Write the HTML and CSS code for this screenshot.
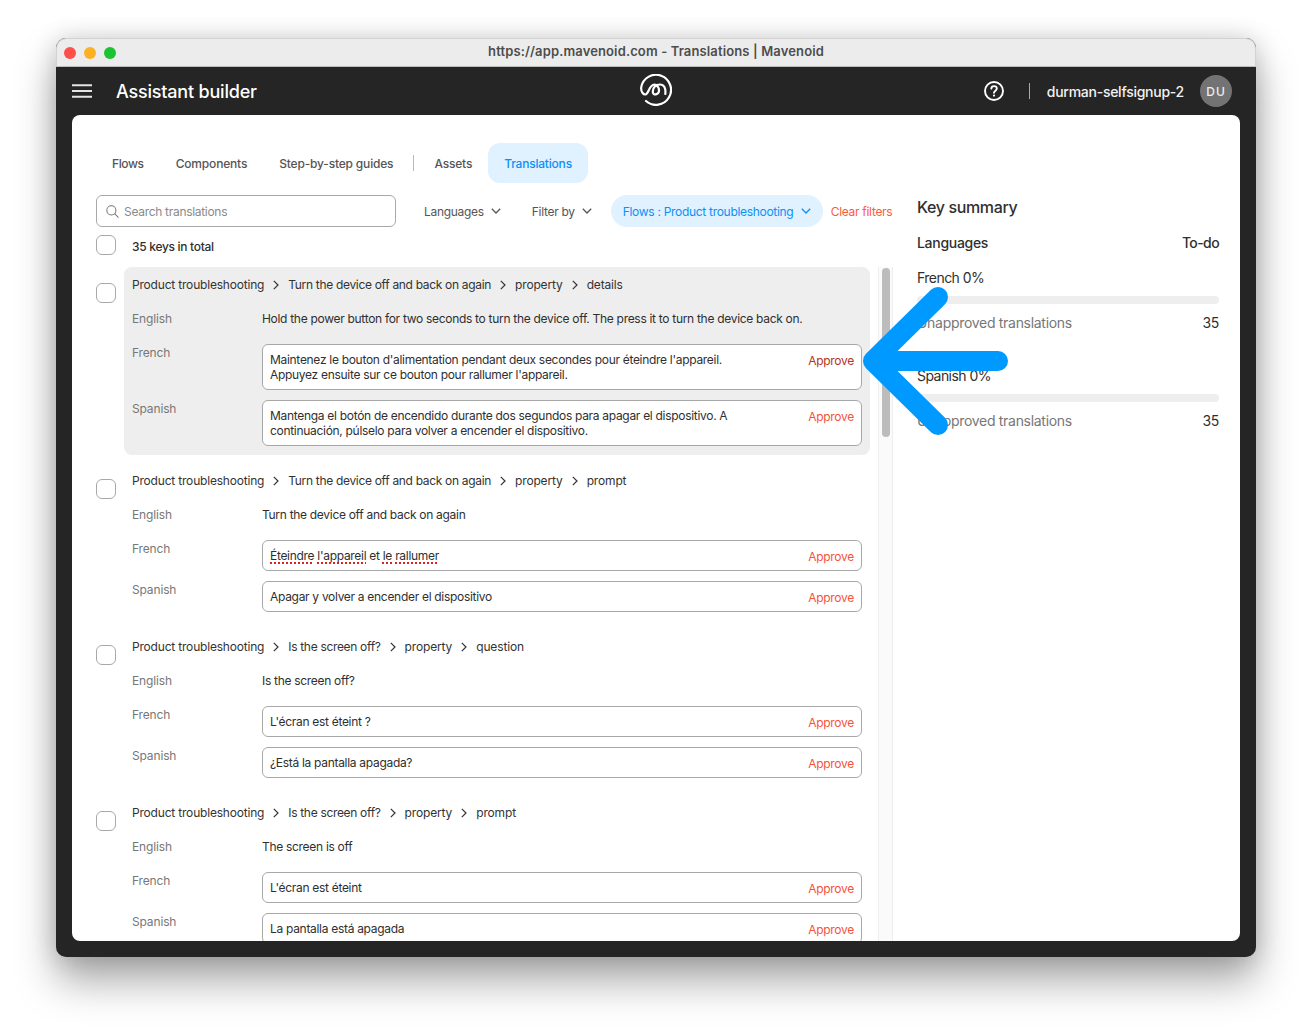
FILE: index.html
```html
<!DOCTYPE html>
<html lang="en">
<head>
<meta charset="utf-8">
<title>Translations | Mavenoid</title>
<link rel="stylesheet" href="styles.css">
</head>
<body>
<div class="window">
  <div class="titlebar">
    <div class="lights"><i class="light red"></i><i class="light yellow"></i><i class="light green"></i></div>
    <div class="url">https://app.mavenoid.com - Translations | Mavenoid</div>
  </div>
  <header class="appbar">
    <div class="appbar-left">
      <svg class="burger" width="20" height="14" viewBox="0 0 20 14"><path d="M0 1.2h20M0 7h20M0 12.8h20" stroke="#e4e4e4" stroke-width="2" fill="none"/></svg>
      <span class="app-title">Assistant builder</span>
    </div>
    <svg class="logo" width="32" height="32" viewBox="0 0 32 32" fill="none" stroke="#fff" stroke-width="2.2" stroke-linecap="round"><path d="M6 27A15 15 0 1 0 1.200 13.500C.8 18 3.500 20.700 5.500 20.500C8.500 20.200 9 12 13.500 10.800C16.500 10 19.200 13.500 19 16.800C18.800 20.800 13 22 12.800 18C12.600 13.500 16 10.500 20 10.500C24 10.500 26 14 25.300 20"/></svg>
    <div class="appbar-right">
      <svg class="help" width="20" height="20" viewBox="0 0 20 20" fill="none" stroke="#fff" stroke-width="1.900"><circle cx="10" cy="10" r="9"/><path d="M7.300 7.600C7.400 6 8.600 5.100 10 5.100c1.600 0 2.800 1 2.800 2.400 0 2.100-2.800 2.200-2.800 4.300" stroke-linecap="round"/><circle cx="10" cy="14.600" r="1.100" fill="#fff" stroke="none"/></svg>
      <span class="vbar"></span>
      <span class="user">durman-selfsignup-2</span>
      <span class="avatar">DU</span>
    </div>
  </header>
  <main class="panel">
    <div class="content">
      <nav class="tabs">
        <a class="tab">Flows</a>
        <a class="tab">Components</a>
        <a class="tab">Step-by-step guides</a>
        <span class="tab-sep"></span>
        <a class="tab">Assets</a>
        <a class="tab active">Translations</a>
      </nav>
      <div class="columns">
        <section class="left">
          <div class="toolbar">
            <div class="search">
              <svg width="13" height="13" viewBox="0 0 14 14" fill="none" stroke="#777" stroke-width="1.100"><circle cx="5.800" cy="5.800" r="4.900"/><path d="M9.300 9.300l4.200 4.200"/></svg>
              <span>Search translations</span>
            </div>
            <div class="filter filter-lang">Languages <svg class="chev" width="10" height="6" viewBox="0 0 10 6"><path d="M.8.8L5 5l4.200-4.200" fill="none" stroke="currentColor" stroke-width="1.300"/></svg></div>
            <div class="filter filter-by">Filter by <svg class="chev" width="10" height="6" viewBox="0 0 10 6"><path d="M.8.8L5 5l4.200-4.200" fill="none" stroke="currentColor" stroke-width="1.300"/></svg></div>
            <div class="pill">Flows : Product troubleshooting <svg class="chev" width="10" height="6" viewBox="0 0 10 6"><path d="M.8.8L5 5l4.200-4.200" fill="none" stroke="currentColor" stroke-width="1.300"/></svg></div>
            <a class="clear">Clear filters</a>
          </div>
          <div class="total"><span class="check"></span><span class="total-text">35 keys in total</span></div>
          <div class="list-wrap">
            <div class="list">
              <article class="entry">
                <span class="check entry-check"></span>
                <div class="card hovered">
                  <div class="path"><span>Product troubleshooting</span><svg class="gt" width="6" height="10" viewBox="0 0 6 10"><path d="M.8.8L5 5 .8 9.200" fill="none" stroke="#333" stroke-width="1.200"/></svg><span>Turn the device off and back on again</span><svg class="gt" width="6" height="10" viewBox="0 0 6 10"><path d="M.8.8L5 5 .8 9.200" fill="none" stroke="#333" stroke-width="1.200"/></svg><span>property</span><svg class="gt" width="6" height="10" viewBox="0 0 6 10"><path d="M.8.8L5 5 .8 9.200" fill="none" stroke="#333" stroke-width="1.200"/></svg><span>details</span></div>
                  <div class="line source"><span class="lang">English</span><span>Hold the power button for two seconds to turn the device off. The press it to turn the device back on.</span></div>
                  <div class="line"><span class="lang">French</span><div class="field"><span class="txt">Maintenez le bouton d'alimentation pendant deux secondes pour éteindre l'appareil.<br>Appuyez ensuite sur ce bouton pour rallumer l'appareil.</span><a class="approve dark">Approve</a></div></div>
                  <div class="line"><span class="lang">Spanish</span><div class="field"><span class="txt">Mantenga el botón de encendido durante dos segundos para apagar el dispositivo. A<br>continuación, púlselo para volver a encender el dispositivo.</span><a class="approve">Approve</a></div></div>
                </div>
              </article>
              <article class="entry">
                <span class="check entry-check"></span>
                <div class="card">
                  <div class="path"><span>Product troubleshooting</span><svg class="gt" width="6" height="10" viewBox="0 0 6 10"><path d="M.8.8L5 5 .8 9.200" fill="none" stroke="#333" stroke-width="1.200"/></svg><span>Turn the device off and back on again</span><svg class="gt" width="6" height="10" viewBox="0 0 6 10"><path d="M.8.8L5 5 .8 9.200" fill="none" stroke="#333" stroke-width="1.200"/></svg><span>property</span><svg class="gt" width="6" height="10" viewBox="0 0 6 10"><path d="M.8.8L5 5 .8 9.200" fill="none" stroke="#333" stroke-width="1.200"/></svg><span>prompt</span></div>
                  <div class="line source"><span class="lang">English</span><span>Turn the device off and back on again</span></div>
                  <div class="line"><span class="lang">French</span><div class="field"><span class="txt"><u>Éteindre</u> <u>l'appareil</u> et <u>le</u> <u>rallumer</u></span><a class="approve">Approve</a></div></div>
                  <div class="line"><span class="lang">Spanish</span><div class="field"><span class="txt">Apagar y volver a encender el dispositivo</span><a class="approve">Approve</a></div></div>
                </div>
              </article>
              <article class="entry">
                <span class="check entry-check"></span>
                <div class="card">
                  <div class="path"><span>Product troubleshooting</span><svg class="gt" width="6" height="10" viewBox="0 0 6 10"><path d="M.8.8L5 5 .8 9.200" fill="none" stroke="#333" stroke-width="1.200"/></svg><span>Is the screen off?</span><svg class="gt" width="6" height="10" viewBox="0 0 6 10"><path d="M.8.8L5 5 .8 9.200" fill="none" stroke="#333" stroke-width="1.200"/></svg><span>property</span><svg class="gt" width="6" height="10" viewBox="0 0 6 10"><path d="M.8.8L5 5 .8 9.200" fill="none" stroke="#333" stroke-width="1.200"/></svg><span>question</span></div>
                  <div class="line source"><span class="lang">English</span><span>Is the screen off?</span></div>
                  <div class="line"><span class="lang">French</span><div class="field"><span class="txt">L'écran est éteint ?</span><a class="approve">Approve</a></div></div>
                  <div class="line"><span class="lang">Spanish</span><div class="field"><span class="txt">¿Está la pantalla apagada?</span><a class="approve">Approve</a></div></div>
                </div>
              </article>
              <article class="entry">
                <span class="check entry-check"></span>
                <div class="card">
                  <div class="path"><span>Product troubleshooting</span><svg class="gt" width="6" height="10" viewBox="0 0 6 10"><path d="M.8.8L5 5 .8 9.200" fill="none" stroke="#333" stroke-width="1.200"/></svg><span>Is the screen off?</span><svg class="gt" width="6" height="10" viewBox="0 0 6 10"><path d="M.8.8L5 5 .8 9.200" fill="none" stroke="#333" stroke-width="1.200"/></svg><span>property</span><svg class="gt" width="6" height="10" viewBox="0 0 6 10"><path d="M.8.8L5 5 .8 9.200" fill="none" stroke="#333" stroke-width="1.200"/></svg><span>prompt</span></div>
                  <div class="line source"><span class="lang">English</span><span>The screen is off</span></div>
                  <div class="line"><span class="lang">French</span><div class="field"><span class="txt">L'écran est éteint</span><a class="approve">Approve</a></div></div>
                  <div class="line"><span class="lang">Spanish</span><div class="field"><span class="txt">La pantalla está apagada</span><a class="approve">Approve</a></div></div>
                </div>
              </article>
            </div>
            <div class="scroll"><span class="thumb"></span></div>
          </div>
        </section>
        <aside class="summary">
          <h2>Key summary</h2>
          <div class="sum-head"><span>Languages</span><span class="todo">To-do</span></div>
          <div class="sum-block">
            <div class="sum-lang">French 0%</div>
            <div class="bar"></div>
            <div class="sum-row"><span class="muted">Unapproved translations</span><span>35</span></div>
          </div>
          <div class="sum-block">
            <div class="sum-lang">Spanish 0%</div>
            <div class="bar"></div>
            <div class="sum-row"><span class="muted">Unapproved translations</span><span>35</span></div>
          </div>
        </aside>
      </div>
    </div>
  </main>
  <svg class="arrow" width="170" height="150" viewBox="0 0 170 150" fill="none" stroke="#0099ff" stroke-width="20" stroke-linecap="round" stroke-linejoin="round"><path d="M80 11L15 75L80 139M15 75H140"/></svg>
</div>
</body>
</html>
```
FILE: styles.css
```css
* { box-sizing: border-box; }
html, body { margin: 0; height: 100%; }
body {
  background: #fff;
  padding: 38px 56px 0;
  font-family: Inter, "Noto Sans", sans-serif;
  font-size: 12px;
  line-height: 15px;
  letter-spacing: -0.3px;
  color: #2f2f2f;
  overflow: hidden;
}
.window {
  position: relative;
  width: 1200px;
  height: 919px;
  border-radius: 10px;
  background: #252525;
  box-shadow: 0 24px 40px rgba(0,0,0,.34), 0 0 24px rgba(0,0,0,.16);
  display: flex;
  flex-direction: column;
}
.titlebar {
  height: 29px;
  flex: none;
  background: #ececec;
  border: 1px solid #d2d2d2;
  border-bottom: 1px solid #bdbdbd;
  border-radius: 10px 10px 0 0;
  display: flex;
  align-items: center;
  position: relative;
}
.lights { display: flex; gap: 8px; padding-left: 7px; }
.light { width: 12px; height: 12px; border-radius: 50%; display: block; }
.red { background: #ff4f4b; }
.yellow { background: #fcb024; }
.green { background: #19c332; }
.url {
  position: absolute; left: 0; right: 0; top: 5px;
  text-align: center;
  font-size: 13px;
  font-weight: 600;
  letter-spacing: 0.13px;
  color: #4d4d4d;
}
.appbar {
  height: 48px;
  flex: none;
  display: flex;
  align-items: center;
  justify-content: space-between;
  padding: 0 24px 0 16px;
  position: relative;
  color: #fff;
}
.appbar-left { display: flex; align-items: center; gap: 24px; }
.app-title { font-size: 18px; font-weight: 500; line-height: 24px; letter-spacing: -0.2px; position: relative; top: 1px; }
.logo { position: absolute; left: 584px; top: 7px; }
.appbar-right { display: flex; align-items: center; }
.help { margin-right: 25px; }
.vbar { width: 1px; height: 16px; background: #aaa; margin-right: 17px; }
.user { font-size: 14px; font-weight: 500; margin-right: 16px; color: #f2f2f2; letter-spacing: -0.26px; }
.avatar {
  width: 32px; height: 32px; border-radius: 50%;
  background: #737373; color: #eee;
  display: flex; align-items: center; justify-content: center;
  font-size: 12px; font-weight: 500; letter-spacing: 1px;
}
.panel {
  flex: 1;
  margin: 0 16px 16px;
  background: #fff;
  border-radius: 8px;
  overflow: hidden;
  min-height: 0;
}
.content { padding: 28px 21px 0 24px; height: 100%; display: flex; flex-direction: column; }
.tabs { display: flex; align-items: center; height: 40px; flex: none; }
.tab { font-weight: 500; color: #555; padding: 1px 16px 0; line-height: 39px; letter-spacing: -0.18px; }
.tab:first-child { letter-spacing: -0.38px; }
.tab-sep { width: 1px; height: 16px; background: #bbb; margin: 0 4px; }
.tab.active { background: #e0f1ff; color: #0c90f6; border-radius: 12px; letter-spacing: -0.2px; }
.columns { display: flex; flex: 1; min-height: 0; margin-top: 12px; }
.left { width: 797px; flex: none; display: flex; flex-direction: column; min-height: 0; }
.toolbar { display: flex; align-items: center; height: 32px; flex: none; }
.search {
  width: 300px; height: 32px; flex: none;
  border: 1px solid #a8a8a8; border-radius: 6px;
  display: flex; align-items: center; gap: 5px;
  padding-left: 9px; color: #8a8a8a;
}
.filter { color: #555; display: flex; align-items: center; gap: 7px; flex: none; white-space: nowrap; }
.filter-lang { margin-left: 28px; }
.filter-by { margin-left: 31px; }
.chev { flex: none; }
.pill {
  margin-left: 19px;
  height: 32px; width: 212px; border-radius: 16px; flex: none;
  background: #e0f1ff; color: #0c90f6;
  display: flex; align-items: center; gap: 8px;
  padding-left: 12px;
  white-space: nowrap;
}
.clear { margin-left: 8px; color: #fb5a3e; white-space: nowrap; }
.total { display: flex; align-items: center; gap: 16px; height: 20px; margin-top: 8px; font-weight: 500; flex: none; }
.total-text { margin-top: 2px; }
.check {
  display: block; flex: none;
  width: 20px; height: 20px;
  border: 1px solid #a8a8a8; border-radius: 6px; background: #fff;
}
.list-wrap { display: flex; flex: 1; min-height: 0; margin-top: 12px; }
.list { width: 782px; flex: none; overflow: hidden; }
.entry { display: flex; margin-bottom: 8px; }
.entry-check { margin: 16px 8px 0 0; }
.card { width: 746px; flex: none; padding: 8px 8px 9px; border-radius: 8px; }
.card.hovered { background: #eeeeee; }
.path { display: flex; align-items: center; height: 20px; padding-bottom: 1px; color: #333; letter-spacing: -0.15px; }
.path span:nth-of-type(2) { letter-spacing: -0.32px; }
.path span:first-child { letter-spacing: -0.19px; }
.gt { margin: 0 9px; flex: none; }
.line { display: flex; margin-top: 10px; }
.line.source { margin-top: 14px; margin-bottom: 15px; line-height: 20px; }
.lang { width: 130px; flex: none; color: #777; line-height: 18px; letter-spacing: -0.15px; }
.source .lang { line-height: 20px; }
.field {
  width: 600px; flex: none;
  background: #fff;
  border: 1px solid #a8a8a8; border-radius: 6px;
  padding: 7px;
  display: flex; justify-content: space-between; align-items: flex-start;
}
.txt u {
  text-decoration: underline dotted #e0201b;
  text-decoration-thickness: 1.500px;
  text-underline-offset: 2px;
}
.approve { color: #f5533a; position: relative; top: 1px; letter-spacing: -0.28px; }
.approve.dark { color: #b5331b; }
.scroll {
  width: 15px; flex: none;
  border-left: 1px solid #eee; border-right: 1px solid #eee;
  background: #fafafa;
  padding: 1px 3px 0;
}
.thumb { display: block; width: 8px; height: 169px; border-radius: 4px; background: #bcbcbc; }
.summary { flex: 1; min-width: 0; padding-left: 24px; font-size: 14px; letter-spacing: -0.3px; }
.summary h2 { margin: 0; font-size: 16px; font-weight: 500; line-height: 24px; letter-spacing: -0.36px; }
.sum-head {
  display: flex; justify-content: space-between;
  font-weight: 500; line-height: 20px; margin-top: 14px;
}
.todo { letter-spacing: -0.6px; }
.sum-block { margin-top: 15px; }
.sum-block + .sum-block { margin-top: 33px; }
.sum-lang { line-height: 20px; letter-spacing: -0.55px; }
.bar { height: 8px; border-radius: 4px; background: #eeeeee; margin-top: 8px; }
.sum-row { display: flex; justify-content: space-between; line-height: 20px; margin-top: 9px; }
.muted { color: #777; }
.arrow { position: absolute; left: 802px; top: 248px; }
```
